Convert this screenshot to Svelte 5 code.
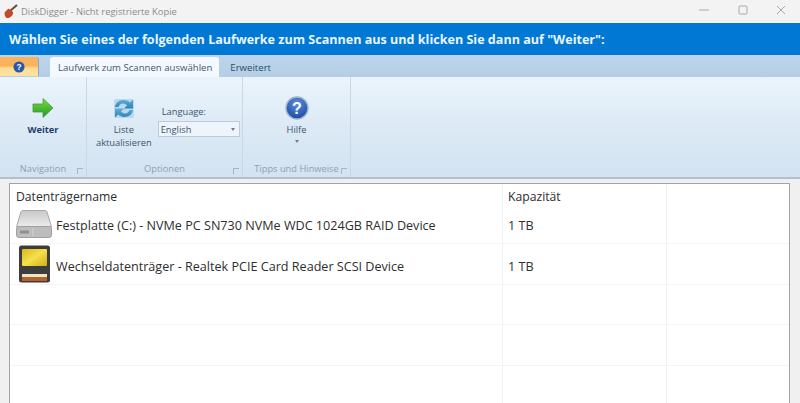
<script>
  let rows = [
    { name: 'Festplatte (C:) - NVMe PC SN730 NVMe WDC 1024GB RAID Device', size: '1 TB', icon: 'hdd' },
    { name: 'Wechseldatenträger - Realtek PCIE Card Reader SCSI Device', size: '1 TB', icon: 'card' },
    { name: '', size: '', icon: '' },
    { name: '', size: '', icon: '' },
    { name: '', size: '', icon: '' }
  ];
</script>

<style>
  :global(body) {
    margin: 0;
    background: #f0f0f0;
    overflow: hidden;
  }

  .window {
    width: 800px;
    height: 403px;
    overflow: hidden;
    font-family: "Open Sans", "Noto Sans", sans-serif;
    display: flex;
    flex-direction: column;
    background: #f0f0f0;
  }

  .titlebar {
    height: 23px;
    flex: none;
    display: flex;
    align-items: center;
    background: #f3f3f3;
    color: #8c8c8c;
    font-size: 9.4px;
    padding-left: 4px;
  }

  .titlebar span {
    margin-left: 2px;
    flex: 1;
  }

  .winbtns {
    display: flex;
    align-items: center;
    gap: 28px;
    padding-right: 14px;
    margin-bottom: 3px;
  }

  .banner {
    height: 32px;
    flex: none;
    background: #0078d4;
    color: #e8f6ff;
    font-size: 12.57px;
    font-weight: 700;
    display: flex;
    align-items: center;
    padding-left: 9px;
    white-space: nowrap;
  }

  .tabs {
    height: 22px;
    flex: none;
    background: linear-gradient(#bdd5ec, #b4cee6);
    display: flex;
    align-items: flex-end;
    font-size: 9.6px;
    color: #2f4a68;
  }

  .apptab {
    width: 38px;
    height: 19px;
    margin-bottom: 1px;
    border-radius: 0 3px 0 0;
    background: linear-gradient(#f9b35c 0 45%, #fddc93 60%, #fde3a2);
    border-right: 1px solid #8ea6c0;
    display: flex;
    align-items: center;
    justify-content: center;
    flex: none;
  }

  .tab {
    height: 20px;
    display: flex;
    align-items: center;
    padding: 0 9px 0 11px;
  }

  .tab.active {
    margin-left: 11px;
    padding: 0 7px 0 8px;
    background: #f3f9fe;
    border-radius: 3px 3px 0 0;
    color: #47586c;
  }

  .ribbon {
    height: 100px;
    flex: none;
    background: linear-gradient(#eaf4fc, #dbe9f5 55%, #d3e3f2);
    border-bottom: 2px solid #b3c0cc;
    display: flex;
  }

  .group {
    display: flex;
    flex-direction: column;
    border-right: 1px solid #c9d8e6;
    flex: none;
  }

  .group .body {
    flex: 1;
    display: flex;
    justify-content: center;
    font-size: 9.3px;
    color: #3c536d;
  }

  .group .label {
    height: 18px;
    font-size: 9.3px;
    color: #8fa0b0;
    display: flex;
    align-items: center;
    justify-content: center;
    position: relative;
  }

  .launcher {
    position: absolute;
    right: 3px;
    bottom: 3px;
    width: 5px;
    height: 5px;
    border: 1px solid #a5b5c4;
    border-width: 1px 0 0 1px;
  }

  .nav { width: 86px; }
  .opt { width: 155px; }
  .tips { width: 107px; }

  .bigbtn {
    display: flex;
    flex-direction: column;
    align-items: center;
    text-align: center;
    line-height: 13px;
    padding-top: 19px;
  }

  .bigbtn svg {
    margin-bottom: 3px;
  }

  .strong {
    font-weight: 700;
    color: #1d3f6b;
  }

  .caret {
    width: 0;
    height: 0;
    margin-top: 4px;
    border: 2px solid transparent;
    border-top: 3px solid #6b7c90;
  }

  .opt .body {
    gap: 6px;
    justify-content: flex-start;
    padding-left: 9px;
  }

  .lang {
    padding-top: 28px;
    display: flex;
    flex-direction: column;
    gap: 3px;
    line-height: 13px;
  }

  .lang span {
    padding-left: 4px;
  }

  .select {
    width: 82px;
    height: 16px;
    box-sizing: border-box;
    background: #eef4fb;
    border: 1px solid #bccada;
    display: flex;
    align-items: center;
    justify-content: space-between;
    padding: 0 4px 0 2px;
    color: #3c536d;
  }

  .select i {
    width: 0;
    height: 0;
    border: 2px solid transparent;
    border-top: 3px solid #6b7c90;
    margin-top: 3px;
  }

  .content {
    flex: 1;
    min-height: 0;
    padding: 4px 10px 0 9px;
  }

  .list {
    height: 100%;
    background: #fff;
    border: 1px solid #a2a2a2;
    border-bottom: none;
    box-sizing: border-box;
    font-size: 12.6px;
    color: #2e2e2e;
    overflow: hidden;
  }

  .row {
    display: grid;
    grid-template-columns: 493px 164px 1fr;
    height: 40.4px;
    box-sizing: border-box;
    border-bottom: 1px solid #f2f5f6;
  }

  .row.head {
    height: 20px;
    border-bottom: none;
    font-size: 12.2px;
  }

  .row > div {
    display: flex;
    align-items: center;
    box-sizing: border-box;
    border-right: 1px solid #eef2f3;
    padding: 4px 0 0 5px;
    white-space: nowrap;
    min-width: 0;
  }

  .row.head > div:first-child {
    padding-left: 6px;
  }

  .row > div:last-child {
    border-right: none;
  }

  .row svg {
    flex: none;
    margin: -4px 4px 0 1px;
  }
</style>

<div class="window">
  <div class="titlebar">
    <svg width="15" height="15" viewBox="0 0 15 15">
      <path d="M0.500 8.500 L4.500 4.500 L9 8 C9.500 11 6.500 14.500 2.500 14 C1 13 0.500 10.500 0.500 8.500Z" fill="#c2492b"/>
      <path d="M6.500 6.500 L13 1" stroke="#6b4a35" stroke-width="2"/>
    </svg>
    <span>DiskDigger - Nicht registrierte Kopie</span>
    <div class="winbtns">
      <svg width="12" height="10" viewBox="0 0 12 10"><path d="M1 5h10" stroke="#a8a8a8"/></svg>
      <svg width="10" height="10" viewBox="0 0 10 10"><rect x="1" y="1" width="8" height="8" rx="1" fill="none" stroke="#a8a8a8"/></svg>
      <svg width="10" height="10" viewBox="0 0 10 10"><path d="M1 1l8 8M9 1l-8 8" stroke="#a8a8a8"/></svg>
    </div>
  </div>

  <div class="banner">Wählen Sie eines der folgenden Laufwerke zum Scannen aus und klicken Sie dann auf "Weiter":</div>

  <div class="tabs">
    <div class="apptab">
      <svg width="12" height="12" viewBox="0 0 13 13">
        <circle cx="6.500" cy="6.500" r="6" fill="#2a56a8"/>
        <text x="6.500" y="10" text-anchor="middle" font-size="9" font-weight="700" fill="#fff" font-family="Liberation Sans">?</text>
      </svg>
    </div>
    <div class="tab active">Laufwerk zum Scannen auswählen</div>
    <div class="tab">Erweitert</div>
  </div>

  <div class="ribbon">
    <div class="group nav">
      <div class="body">
        <div class="bigbtn strong">
          <svg width="24" height="24" viewBox="0 0 24 24">
            <defs>
              <linearGradient id="ga" x1="0" y1="0" x2="0" y2="1">
                <stop offset="0" stop-color="#7edb3e"/>
                <stop offset="1" stop-color="#1c9a26"/>
              </linearGradient>
            </defs>
            <path d="M2 8h10V2.500L22 12 12 21.500V16H2z" fill="url(#ga)" stroke="#4a9a3a" stroke-width="0.8"/>
          </svg>
          Weiter
        </div>
      </div>
      <div class="label">Navigation<i class="launcher"></i></div>
    </div>

    <div class="group opt">
      <div class="body">
        <div class="bigbtn">
          <svg width="24" height="24" viewBox="0 0 24 24">
            <defs>
              <linearGradient id="gr" x1="0" y1="0" x2="0" y2="1">
                <stop offset="0" stop-color="#5fb0dc"/>
                <stop offset="1" stop-color="#2f80b8"/>
              </linearGradient>
            </defs>
            <rect x="2" y="3" width="20" height="19" rx="2" fill="#b9d9ec"/>
            <path d="M3 11C4 4 13 2 18 6.500l3-3v9h-9l3-3C12 6.500 8 7 6.500 11z" fill="url(#gr)"/>
            <path d="M21 14C20 21 11 23 6 18.500l-3 3v-9h9l-3 3c3 3 7 2.500 8.500-1.500z" fill="url(#gr)"/>
          </svg>
          Liste<br />aktualisieren
        </div>
        <div class="lang">
          <span>Language:</span>
          <div class="select">English<i></i></div>
        </div>
      </div>
      <div class="label">Optionen<i class="launcher"></i></div>
    </div>

    <div class="group tips">
      <div class="body">
        <div class="bigbtn">
          <svg width="24" height="24" viewBox="0 0 24 24">
            <defs>
              <radialGradient id="gh" cx="0.5" cy="0.3" r="0.8">
                <stop offset="0" stop-color="#5c8fe0"/>
                <stop offset="1" stop-color="#123f9a"/>
              </radialGradient>
            </defs>
            <circle cx="12" cy="12" r="11" fill="url(#gh)" stroke="#9fb4cc" stroke-width="1.400"/>
            <text x="12" y="18" text-anchor="middle" font-size="16" font-weight="700" fill="#fff" font-family="Liberation Sans">?</text>
          </svg>
          Hilfe
          <i class="caret"></i>
        </div>
      </div>
      <div class="label">Tipps und Hinweise<i class="launcher"></i></div>
    </div>
  </div>

  <div class="content">
    <div class="list">
      <div class="row head">
        <div>Datenträgername</div>
        <div>Kapazität</div>
        <div></div>
      </div>
      {#each rows as row}
        <div class="row">
          <div>
            {#if row.icon === 'hdd'}
              <svg width="36" height="30" viewBox="0 0 36 30">
                <defs>
                  <linearGradient id="gd" x1="0" y1="0" x2="0" y2="1">
                    <stop offset="0" stop-color="#c8c8c8"/>
                    <stop offset="1" stop-color="#ececec"/>
                  </linearGradient>
                </defs>
                <path d="M7 1.500h22c1 0 1.800.6 2.200 1.800L35.500 18H.500L4.800 3.300C5.200 2.100 6 1.500 7 1.500z" fill="url(#gd)" stroke="#a8a8a8"/>
                <rect x="0.500" y="17.500" width="35" height="11" rx="2.500" fill="#bdbdbd" stroke="#a0a0a0"/>
                <rect x="4" y="21.500" width="9" height="3" fill="#8f8f8f"/>
                <path d="M17 19v8" stroke="#d4d4d4"/>
              </svg>
            {:else if row.icon === 'card'}
              <svg width="36" height="38" viewBox="0 0 36 38">
                <defs>
                  <linearGradient id="gy" x1="0" y1="0" x2="1" y2="1">
                    <stop offset="0" stop-color="#d8b818"/>
                    <stop offset="0.500" stop-color="#f6e04c"/>
                    <stop offset="1" stop-color="#d2ae14"/>
                  </linearGradient>
                </defs>
                <rect x="3" y="0.500" width="31" height="37" rx="2.500" fill="#3d3d3d"/>
                <rect x="6" y="4" width="25" height="17" rx="1" fill="url(#gy)"/>
                <rect x="6" y="29" width="25" height="3" fill="#f0e4c8"/>
                <rect x="6" y="32" width="25" height="4" fill="#b5622a"/>
              </svg>
            {/if}
            {row.name}
          </div>
          <div>{row.size}</div>
          <div></div>
        </div>
      {/each}
    </div>
  </div>
</div>
